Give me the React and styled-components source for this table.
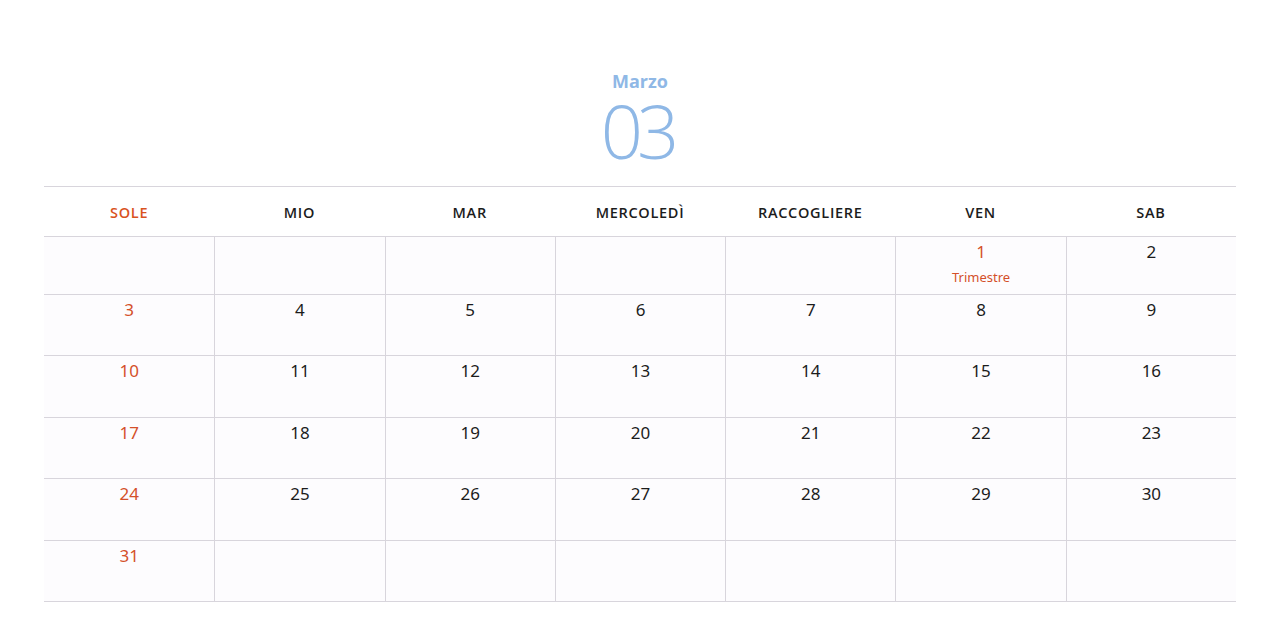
import React from 'react';
import styled, { createGlobalStyle } from 'styled-components';

const GlobalStyle = createGlobalStyle`
  * {
    box-sizing: border-box;
  }
  body {
    margin: 0;
    background: #ffffff;
    font-family: "Noto Sans", "Open Sans", sans-serif;
  }
`;

const Page = styled.div`
  padding: 70px 44px 0;
`;

const Heading = styled.div`
  display: flex;
  flex-direction: column;
  align-items: center;
`;

const MonthName = styled.div`
  color: #8fb8e6;
  font-family: "Open Sans", sans-serif;
  font-weight: 700;
  font-size: 18px;
  line-height: 22px;
`;

const MonthNumber = styled.div`
  color: #8fb8e6;
  font-family: "Open Sans", sans-serif;
  font-weight: 300;
  font-size: 74px;
  line-height: 76px;
  letter-spacing: -6px;
  padding-right: 6px;
  margin-top: 1px;
  margin-bottom: 17px;
`;

const Grid = styled.div`
  display: grid;
  grid-template-columns: repeat(7, 1fr);
  border-top: 1px solid #d8d5dc;
`;

const HeadCell = styled.div`
  height: 50px;
  padding-top: 2px;
  display: flex;
  align-items: center;
  justify-content: center;
  font-family: "Open Sans", sans-serif;
  font-weight: 600;
  font-size: 14.5px;
  letter-spacing: 0.7px;
  color: ${p => (p.sunday ? '#d9531e' : '#1c1c1c')};
  border-bottom: 1px solid #d8d5dc;
`;

const DayCell = styled.div`
  height: ${p => (p.first ? 58 : 61.4)}px;
  display: flex;
  flex-direction: column;
  align-items: center;
  padding-top: 3px;
  background: #fdfcfe;
  border-bottom: 1px solid #d8d5dc;
  border-left: ${p => (p.col === 0 ? 'none' : '1.5px solid #d8d5dc')};
  color: ${p => (p.sunday ? '#d4502a' : '#1c1c1c')};
`;

const DayNumber = styled.span`
  font-size: 17px;
  line-height: 24px;
`;

const Note = styled.span`
  font-size: 13px;
  line-height: 18px;
  margin-top: 4px;
`;

const days = ['SOLE', 'MIO', 'MAR', 'MERCOLEDÌ', 'RACCOGLIERE', 'VEN', 'SAB'];

// March starts on Friday (index 5)
const cells = [];
for (let i = 0; i < 42; i++) {
  const d = i - 4;
  cells.push(d >= 1 && d <= 31 ? d : null);
}

export default function App() {
  return (
    <>
      <GlobalStyle />
      <Page>
        <Heading>
          <MonthName>Marzo</MonthName>
          <MonthNumber>03</MonthNumber>
        </Heading>
        <Grid>
          {days.map((d, i) => (
            <HeadCell key={d} sunday={i === 0}>{d}</HeadCell>
          ))}
          {cells.map((d, i) => {
            const col = i % 7;
            const red = col === 0 || d === 1;
            return (
              <DayCell key={i} col={col} first={i < 7} sunday={red}>
                {d && <DayNumber>{d}</DayNumber>}
                {d === 1 && <Note>Trimestre</Note>}
              </DayCell>
            );
          })}
        </Grid>
      </Page>
    </>
  );
}
